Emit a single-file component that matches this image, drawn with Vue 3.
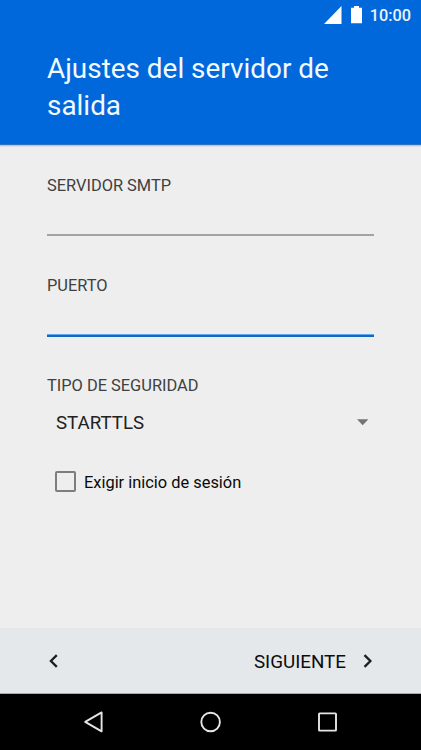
<script setup>
import { ref } from 'vue'

const server = ref('')
const port = ref('')
const security = ref('STARTTLS')
const requireLogin = ref(false)
</script>

<template>
  <div class="screen">
    <header class="header">
      <div class="status">
        <svg class="signal" width="18" height="18" viewBox="0 0 18 18"><path d="M17.5 0V18H0Z" fill="#fff" /></svg>
        <svg class="battery" width="11" height="18" viewBox="0 0 11 18"><path d="M3 0h5v1.7h3v15.5H0V1.7h3Z" fill="#fff" /></svg>
        <span class="clock">10:00</span>
      </div>
      <h1 class="title">Ajustes del servidor de salida</h1>
    </header>

    <main class="form">
      <label class="field">
        <span class="label">SERVIDOR SMTP</span>
        <input v-model="server" class="input" type="text" />
      </label>
      <label class="field">
        <span class="label">PUERTO</span>
        <input v-model="port" class="input active" type="text" />
      </label>
      <div class="label">TIPO DE SEGURIDAD</div>
      <div class="select">
        <span>{{ security }}</span>
        <svg class="caret" width="12" height="7" viewBox="0 0 12 7"><path d="M0 0.2H11.4L5.7 6.2Z" fill="#747474" /></svg>
      </div>
      <div class="check" role="checkbox" :aria-checked="requireLogin" @click="requireLogin = !requireLogin">
        <span class="box"></span>
        <span class="caption">Exigir inicio de sesión</span>
      </div>
    </main>

    <footer class="actions">
      <svg width="10" height="14" viewBox="0 0 10 14"><path d="M7.8 1.1L1.9 7L7.8 12.9" fill="none" stroke="#1c1e1f" stroke-width="2.3" /></svg>
      <div class="next">
        <span class="caption">SIGUIENTE</span>
        <svg width="10" height="14" viewBox="0 0 10 14"><path d="M1.5 1.1L7.4 7L1.5 12.9" fill="none" stroke="#1c1e1f" stroke-width="2.3" /></svg>
      </div>
    </footer>

    <nav class="navbar">
      <svg width="20" height="22" viewBox="0 0 20 22"><path d="M18.6 1.4V20.4L2.2 10.9Z" fill="none" stroke="#e6e6e6" stroke-width="1.9" stroke-linejoin="round" /></svg>
      <svg width="22" height="22" viewBox="0 0 22 22"><circle cx="10.6" cy="11" r="9.3" fill="none" stroke="#e6e6e6" stroke-width="1.9" /></svg>
      <svg width="20" height="20" viewBox="0 0 20 20"><rect x="1" y="1.4" width="17" height="17.2" rx="0.6" fill="none" stroke="#e6e6e6" stroke-width="1.9" /></svg>
    </nav>
  </div>
</template>

<style>
body {
  margin: 0;
}
</style>

<style scoped>
.screen {
  box-sizing: border-box;
  width: 421px;
  height: 750px;
  display: flex;
  flex-direction: column;
  overflow: hidden;
  background: #eee;
  font-family: Roboto, sans-serif;
  color: #212121;
}
.header {
  box-sizing: border-box;
  height: 145px;
  flex: none;
  background: #0068da;
  color: #fff;
  border-bottom: 1px solid #2f74c0;
  box-shadow: 0 1px 0 #b5c5da, 0 2px 0 #dce1e8;
}
.status {
  height: 30px;
  box-sizing: border-box;
  padding-right: 10px;
  display: flex;
  align-items: center;
  justify-content: flex-end;
}
.signal {
  margin-right: 9.5px;
}
.battery {
  margin-right: 7.5px;
}
.clock {
  padding-top: 1px;
  font-size: 16.3px;
  line-height: 20px;
  font-weight: 500;
  color: #e9f3ff;
}
.title {
  margin: 20px 47px 0;
  font-size: 27.9px;
  line-height: 37.4px;
  font-weight: 400;
  color: #f2faff;
}
.form {
  flex: 1;
  padding: 31px 47px 0;
}
.field {
  display: block;
  height: 100px;
}
.label {
  display: block;
  font-size: 16.4px;
  line-height: 20px;
  color: #404040;
}
.input {
  display: block;
  box-sizing: border-box;
  width: 327px;
  height: 40px;
  padding: 0;
  border: 0;
  border-bottom: 2px solid #a3a3a3;
  border-radius: 0;
  outline: none;
  background: transparent;
  font: inherit;
}
.input.active {
  height: 41px;
  border-bottom: 2px solid #1467be;
  box-shadow: inset 0 -1px 0 #62aaf0;
}
.select {
  height: 54px;
  padding: 0 5px 0 9px;
  display: flex;
  align-items: center;
  justify-content: space-between;
  font-size: 18.7px;
}
.caret {
  margin-bottom: 2px;
}
.check {
  margin-top: 21px;
  padding-left: 8px;
  display: flex;
  align-items: center;
  gap: 8px;
  height: 21px;
  font-size: 16.4px;
  color: #0a0a0a;
}
.caption {
  padding-top: 1px;
}
.next .caption {
  padding-top: 2px;
}
.box {
  box-sizing: border-box;
  width: 21px;
  height: 21px;
  border: 2px solid #7d7d7d;
  border-radius: 2px;
}
.actions {
  box-sizing: border-box;
  height: 66px;
  flex: none;
  padding: 0 48px 0 49px;
  display: flex;
  align-items: center;
  justify-content: space-between;
  background: #e4e8eb;
  border-bottom: 1px solid #a8abad;
  color: #0c0c0c;
}
.next {
  display: flex;
  align-items: center;
  gap: 17px;
  font-size: 18.8px;
}
.navbar {
  height: 56px;
  flex: none;
  box-sizing: border-box;
  padding: 0 83px;
  display: flex;
  align-items: center;
  justify-content: space-between;
  background: #000;
}
</style>
